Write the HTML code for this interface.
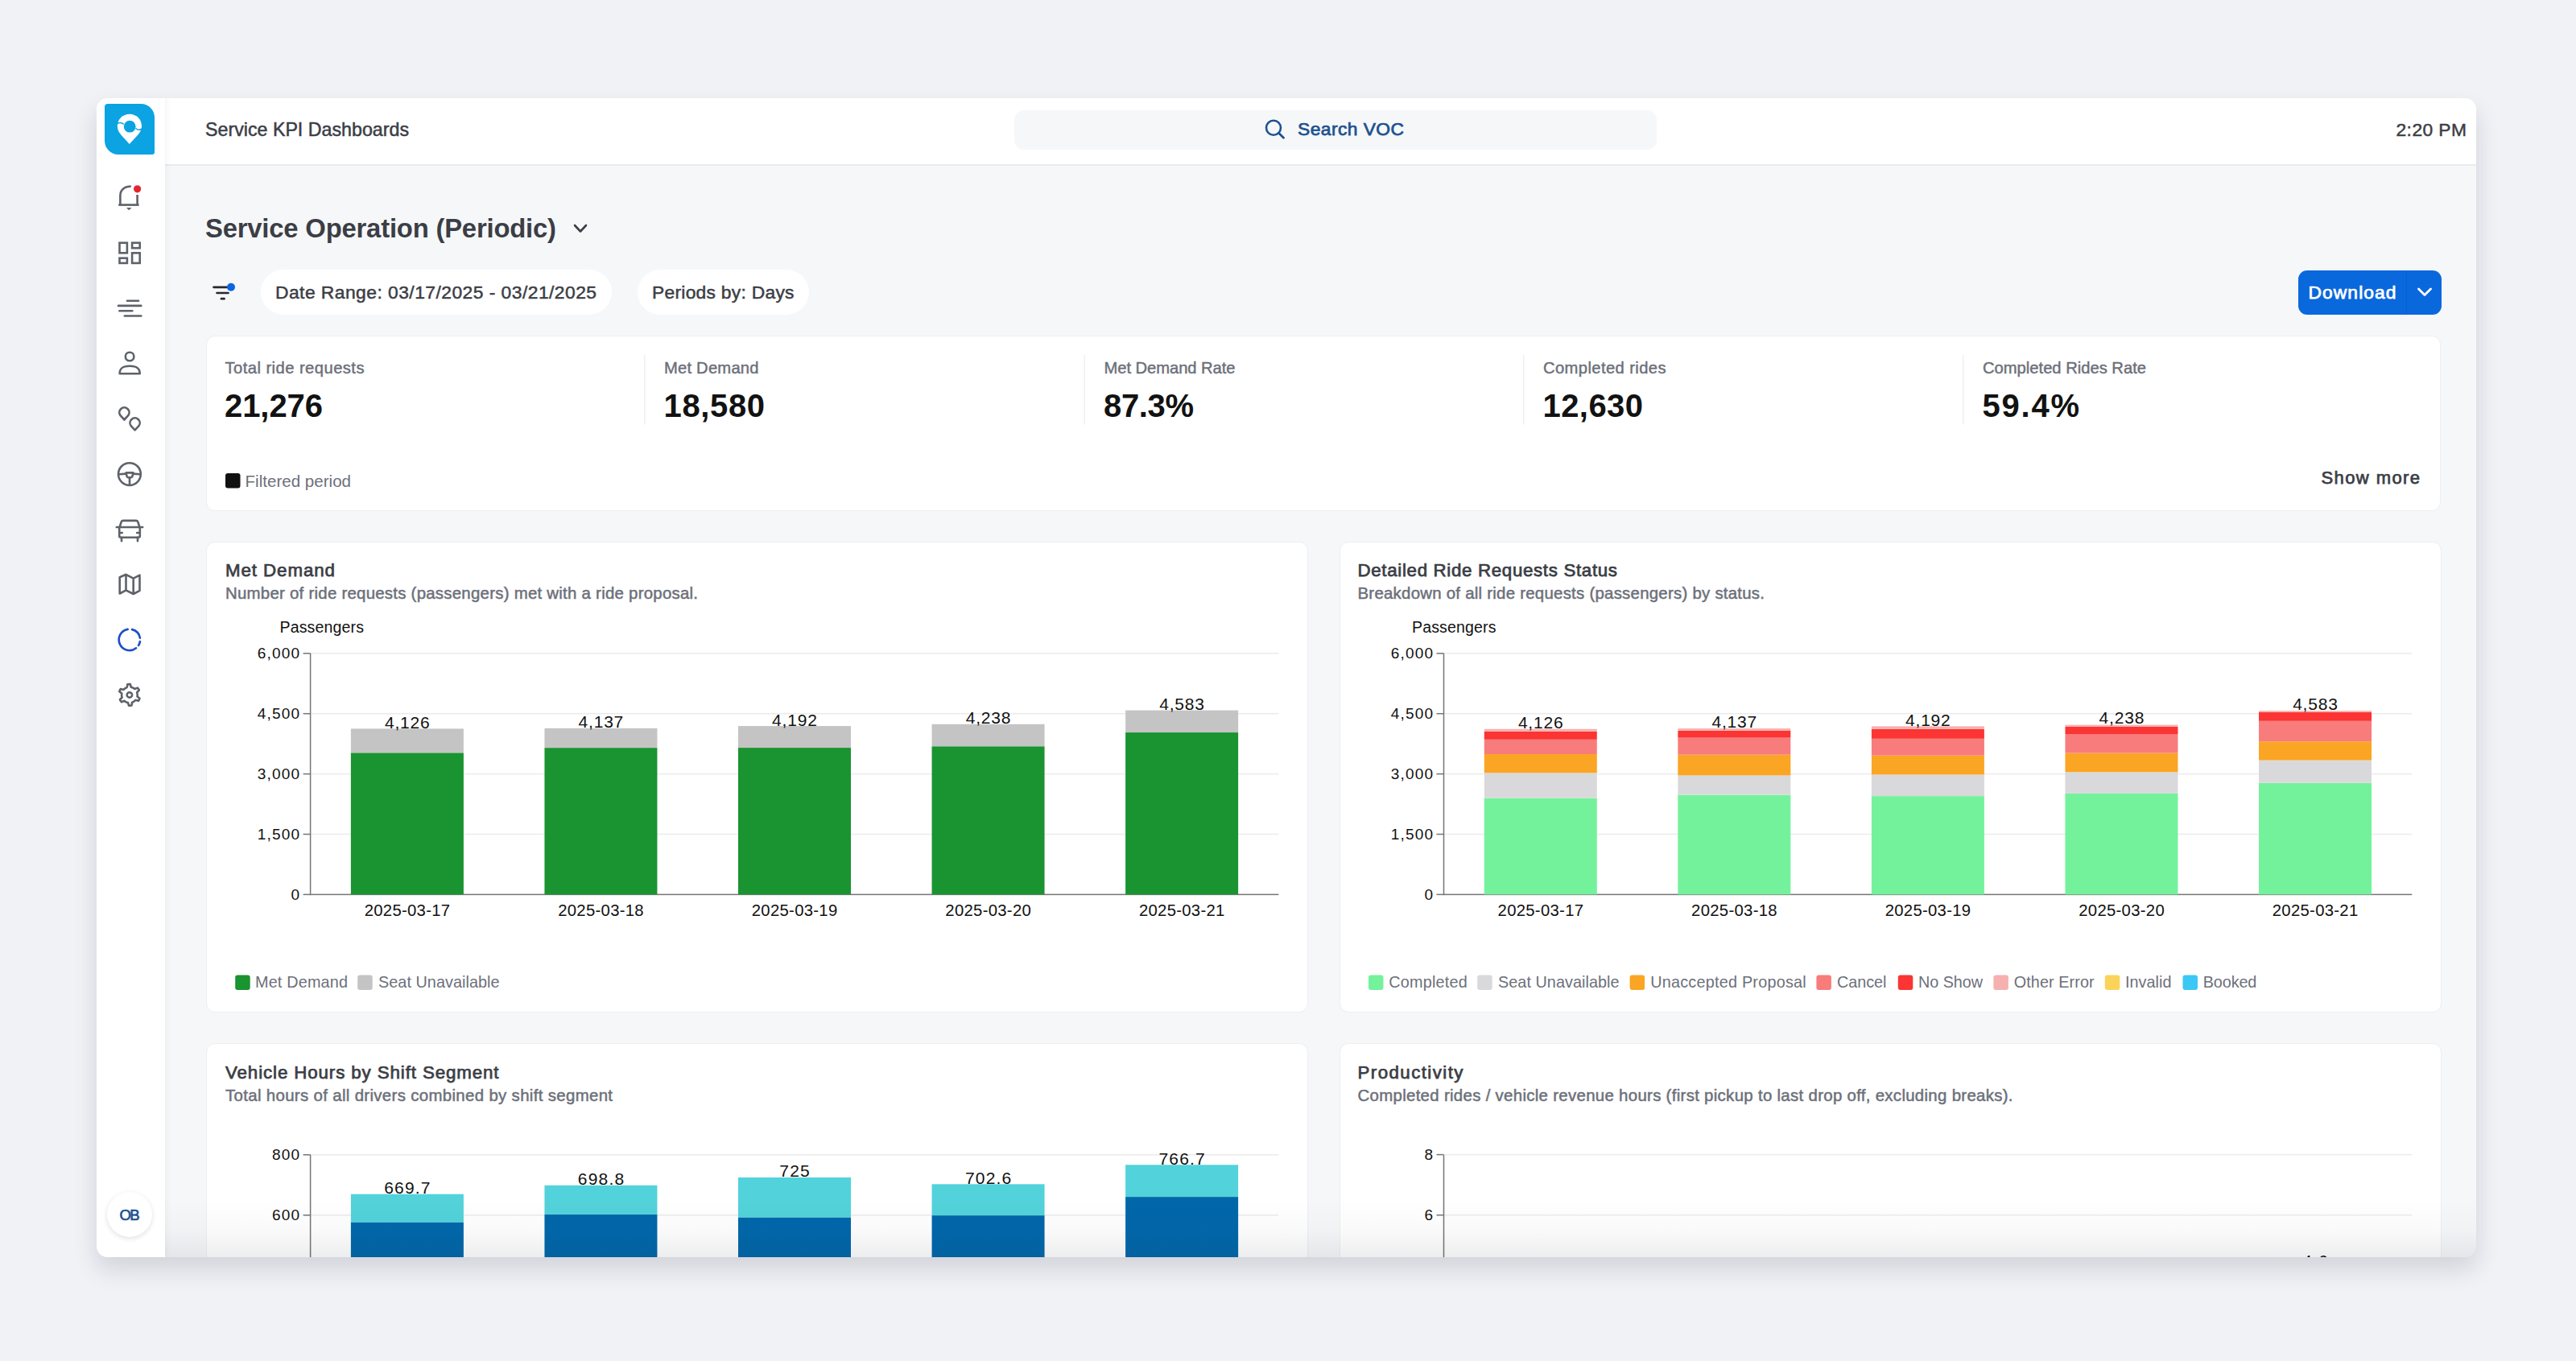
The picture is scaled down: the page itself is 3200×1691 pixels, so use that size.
<!DOCTYPE html>
<html><head><meta charset="utf-8"><style>
html,body{margin:0;padding:0}
body{width:3200px;height:1691px;background:#f1f2f6;position:relative;overflow:hidden;font-family:"Liberation Sans", sans-serif}
svg text{font-family:"Liberation Sans", sans-serif}
</style></head><body>
<div style="position:absolute;left:120px;top:122px;width:2956px;height:1440px;border-radius:14px;box-shadow:0 15px 30px rgba(20,24,40,0.14);background:#f6f7f9"></div>
<div style="position:absolute;left:120px;top:122px;width:2956px;height:1440px;border-radius:14px;overflow:hidden">
<div style="position:absolute;left:-120px;top:-122px;width:3200px;height:1691px">
<div style="position:absolute;left:205px;top:122px;width:2871px;height:82px;background:#fff;border-bottom:2px solid #eaebec"></div><div style="position:absolute;left:120px;top:122px;width:85px;height:1440px;background:#fff;box-shadow:2px 0 8px rgba(0,0,0,0.05)"></div><div style="position:absolute;left:1260px;top:136.5px;width:798px;height:49px;border-radius:12px;background:#f6f7f9"></div><div style="position:absolute;left:324px;top:335px;width:436px;height:56px;border-radius:28px;background:#fff"></div><div style="position:absolute;left:792px;top:335px;width:213px;height:56px;border-radius:28px;background:#fff"></div><div style="position:absolute;left:2855px;top:335.5px;width:178px;height:55px;border-radius:11px;background:#0a68dd"></div><div style="position:absolute;left:2988.5px;top:335.5px;width:1.5px;height:55px;background:rgba(0,40,120,0.10)"></div><div style="position:absolute;left:255.5px;top:417px;width:2776px;height:217.5px;border-radius:11px;background:#fff;box-sizing:border-box;border:1.5px solid #eceef0"></div><div style="position:absolute;left:255.5px;top:673px;width:1369px;height:585px;border-radius:11px;background:#fff;box-sizing:border-box;border:1.5px solid #eceef0"></div><div style="position:absolute;left:1663.5px;top:673px;width:1369px;height:585px;border-radius:11px;background:#fff;box-sizing:border-box;border:1.5px solid #eceef0"></div><div style="position:absolute;left:255.5px;top:1296px;width:1369px;height:400px;border-radius:11px;background:#fff;box-sizing:border-box;border:1.5px solid #eceef0"></div><div style="position:absolute;left:1663.5px;top:1296px;width:1369px;height:400px;border-radius:11px;background:#fff;box-sizing:border-box;border:1.5px solid #eceef0"></div><div style="position:absolute;left:133px;top:1481px;width:56px;height:56px;border-radius:50%;background:#fff;box-shadow:0 2px 6px rgba(0,0,0,0.12)"></div><div style="position:absolute;left:130px;top:129px;width:62px;height:62.5px;background:#0ba3e2;border-radius:4px 17px 3px 17px"></div>
<svg style="position:absolute;left:0;top:0" width="3200" height="1691" viewBox="0 0 3200 1691">
<text x="255" y="169" font-size="23.2" fill="#3b3e45" textLength="253" lengthAdjust="spacing" stroke="#3b3e45" stroke-width="0.5">Service KPI Dashboards</text>
<text x="1612" y="168" font-size="22.8" fill="#1c5290" textLength="132" lengthAdjust="spacing" stroke="#1c5290" stroke-width="0.75">Search VOC</text>
<text x="3064" y="168.5" font-size="22.8" fill="#3b3e45" text-anchor="end" textLength="87.5" lengthAdjust="spacing" stroke="#3b3e45" stroke-width="0.5">2:20 PM</text>
<circle cx="1582" cy="158.7" r="9" fill="none" stroke="#1c5290" stroke-width="2.6"/>
<line x1="1588.5" y1="165.2" x2="1594.5" y2="171.2" stroke="#1c5290" stroke-width="2.8" stroke-linecap="round"/>
<text x="255" y="295" font-size="32.8" font-weight="700" fill="#3b3e45" textLength="436" lengthAdjust="spacing">Service Operation (Periodic)</text>
<polyline points="714,280 721,287.5 728,280" fill="none" stroke="#3b3e45" stroke-width="2.6" stroke-linecap="round" stroke-linejoin="round"/>
<g stroke="#26282d" stroke-width="2.7" stroke-linecap="round"><line x1="265.5" y1="356.8" x2="284" y2="356.8"/><line x1="269.5" y1="364" x2="283.5" y2="364"/><line x1="275" y1="371.2" x2="278.5" y2="371.2"/></g>
<circle cx="287" cy="356.7" r="5" fill="#0a66e0"/>
<text x="342" y="371" font-size="22.8" fill="#3b3e45" textLength="399" lengthAdjust="spacing" stroke="#3b3e45" stroke-width="0.5">Date Range: 03/17/2025 - 03/21/2025</text>
<text x="810" y="371" font-size="22.8" fill="#3b3e45" textLength="176.5" lengthAdjust="spacing" stroke="#3b3e45" stroke-width="0.5">Periods by: Days</text>
<text x="2867.5" y="371" font-size="22.8" fill="#ffffff" textLength="109" lengthAdjust="spacing" stroke="#ffffff" stroke-width="0.75">Download</text>
<polyline points="3004.5,359 3012,366.5 3019.5,359" fill="none" stroke="#fff" stroke-width="2.8" stroke-linecap="round" stroke-linejoin="round"/>
<text x="279.5" y="463.5" font-size="20.2" fill="#6c707a" textLength="173" lengthAdjust="spacing" stroke="#6c707a" stroke-width="0.45">Total ride requests</text>
<text x="279.0" y="518" font-size="40" font-weight="700" fill="#121212" textLength="122" lengthAdjust="spacing">21,276</text>
<text x="825" y="463.5" font-size="20.2" fill="#6c707a" textLength="117.5" lengthAdjust="spacing" stroke="#6c707a" stroke-width="0.45">Met Demand</text>
<text x="824.5" y="518" font-size="40" font-weight="700" fill="#121212" textLength="125.5" lengthAdjust="spacing">18,580</text>
<rect x="800.00" y="441.00" width="1.50" height="86.50" fill="#eeeff1"/>
<text x="1371.5" y="463.5" font-size="20.2" fill="#6c707a" textLength="163" lengthAdjust="spacing" stroke="#6c707a" stroke-width="0.45">Met Demand Rate</text>
<text x="1371.0" y="518" font-size="40" font-weight="700" fill="#121212" textLength="112" lengthAdjust="spacing">87.3%</text>
<rect x="1346.50" y="441.00" width="1.50" height="86.50" fill="#eeeff1"/>
<text x="1917" y="463.5" font-size="20.2" fill="#6c707a" textLength="152.5" lengthAdjust="spacing" stroke="#6c707a" stroke-width="0.45">Completed rides</text>
<text x="1916.5" y="518" font-size="40" font-weight="700" fill="#121212" textLength="124.5" lengthAdjust="spacing">12,630</text>
<rect x="1892.00" y="441.00" width="1.50" height="86.50" fill="#eeeff1"/>
<text x="2463" y="463.5" font-size="20.2" fill="#6c707a" textLength="203" lengthAdjust="spacing" stroke="#6c707a" stroke-width="0.45">Completed Rides Rate</text>
<text x="2462.5" y="518" font-size="40" font-weight="700" fill="#121212" textLength="120.5" lengthAdjust="spacing">59.4%</text>
<rect x="2438.00" y="441.00" width="1.50" height="86.50" fill="#eeeff1"/>
<rect x="280" y="588" width="18.5" height="18.5" rx="3" fill="#111"/>
<text x="304.5" y="604.5" font-size="20.5" fill="#6c707a" textLength="131.5" lengthAdjust="spacing">Filtered period</text>
<text x="3006" y="601" font-size="22" fill="#3b3e45" text-anchor="end" textLength="122.5" lengthAdjust="spacing" stroke="#3b3e45" stroke-width="0.75">Show more</text>
<text x="280" y="716" font-size="22.3" fill="#3b3e45" textLength="136" lengthAdjust="spacing" stroke="#3b3e45" stroke-width="0.75">Met Demand</text>
<text x="280" y="743.5" font-size="20.4" fill="#6c707a" textLength="587" lengthAdjust="spacing" stroke="#6c707a" stroke-width="0.5">Number of ride requests (passengers) met with a ride proposal.</text>
<text x="347.5" y="786.2" font-size="19.5" fill="#111" textLength="104.5" lengthAdjust="spacing">Passengers</text>
<rect x="376.60" y="1110.65" width="9.00" height="1.50" fill="#757575"/>
<text x="373.3" y="1117.7" font-size="19" fill="#111" text-anchor="end" letter-spacing="1.2">0</text>
<rect x="385.60" y="1035.75" width="1202.80" height="1.50" fill="#ebebeb"/>
<rect x="376.60" y="1035.75" width="9.00" height="1.50" fill="#757575"/>
<text x="373.3" y="1042.8" font-size="19" fill="#111" text-anchor="end" letter-spacing="1.2">1,500</text>
<rect x="385.60" y="960.85" width="1202.80" height="1.50" fill="#ebebeb"/>
<rect x="376.60" y="960.85" width="9.00" height="1.50" fill="#757575"/>
<text x="373.3" y="967.9000000000001" font-size="19" fill="#111" text-anchor="end" letter-spacing="1.2">3,000</text>
<rect x="385.60" y="885.95" width="1202.80" height="1.50" fill="#ebebeb"/>
<rect x="376.60" y="885.95" width="9.00" height="1.50" fill="#757575"/>
<text x="373.3" y="893.0" font-size="19" fill="#111" text-anchor="end" letter-spacing="1.2">4,500</text>
<rect x="385.60" y="811.05" width="1202.80" height="1.50" fill="#ebebeb"/>
<rect x="376.60" y="811.05" width="9.00" height="1.50" fill="#757575"/>
<text x="373.3" y="818.1" font-size="19" fill="#111" text-anchor="end" letter-spacing="1.2">6,000</text>
<rect x="384.85" y="811.80" width="1.50" height="300.40" fill="#757575"/>
<rect x="385.60" y="1110.65" width="1202.80" height="1.50" fill="#757575"/>
<rect x="435.88" y="905.38" width="140.00" height="30.11" fill="#c4c4c4"/>
<rect x="435.88" y="935.48" width="140.00" height="175.92" fill="#1a9331"/>
<text x="506.28" y="904.8750666666667" font-size="21" fill="#111" text-anchor="middle" letter-spacing="0.8">4,126</text>
<text x="506.03" y="1138.2" font-size="20.3" fill="#111" text-anchor="middle" letter-spacing="0.3">2025-03-17</text>
<rect x="676.44" y="904.83" width="140.00" height="24.37" fill="#c4c4c4"/>
<rect x="676.44" y="929.19" width="140.00" height="182.21" fill="#1a9331"/>
<text x="746.84" y="904.3258000000001" font-size="21" fill="#111" text-anchor="middle" letter-spacing="0.8">4,137</text>
<text x="746.59" y="1138.2" font-size="20.3" fill="#111" text-anchor="middle" letter-spacing="0.3">2025-03-18</text>
<rect x="917.00" y="902.08" width="140.00" height="27.01" fill="#c4c4c4"/>
<rect x="917.00" y="929.09" width="140.00" height="182.31" fill="#1a9331"/>
<text x="987.4" y="901.5794666666668" font-size="21" fill="#111" text-anchor="middle" letter-spacing="0.8">4,192</text>
<text x="987.15" y="1138.2" font-size="20.3" fill="#111" text-anchor="middle" letter-spacing="0.3">2025-03-19</text>
<rect x="1157.56" y="899.78" width="140.00" height="27.61" fill="#c4c4c4"/>
<rect x="1157.56" y="927.40" width="140.00" height="184.00" fill="#1a9331"/>
<text x="1227.96" y="899.2825333333334" font-size="21" fill="#111" text-anchor="middle" letter-spacing="0.8">4,238</text>
<text x="1227.71" y="1138.2" font-size="20.3" fill="#111" text-anchor="middle" letter-spacing="0.3">2025-03-20</text>
<rect x="1398.12" y="882.56" width="140.00" height="27.51" fill="#c4c4c4"/>
<rect x="1398.12" y="910.07" width="140.00" height="201.33" fill="#1a9331"/>
<text x="1468.52" y="882.0555333333334" font-size="21" fill="#111" text-anchor="middle" letter-spacing="0.8">4,583</text>
<text x="1468.27" y="1138.2" font-size="20.3" fill="#111" text-anchor="middle" letter-spacing="0.3">2025-03-21</text>
<rect x="292.2" y="1211.5" width="18.5" height="18.5" rx="3" fill="#1a9331"/>
<text x="317" y="1227.2" font-size="19.8" fill="#6c707a" textLength="115" lengthAdjust="spacing">Met Demand</text>
<rect x="444.2" y="1211.5" width="18.5" height="18.5" rx="3" fill="#c4c4c4"/>
<text x="470" y="1227.2" font-size="19.8" fill="#6c707a" textLength="150.5" lengthAdjust="spacing">Seat Unavailable</text>
<text x="1686.5" y="716" font-size="22.3" fill="#3b3e45" textLength="322.5" lengthAdjust="spacing" stroke="#3b3e45" stroke-width="0.75">Detailed Ride Requests Status</text>
<text x="1686.5" y="743.5" font-size="20.4" fill="#6c707a" textLength="505.5" lengthAdjust="spacing" stroke="#6c707a" stroke-width="0.5">Breakdown of all ride requests (passengers) by status.</text>
<text x="1754" y="786.2" font-size="19.5" fill="#111" textLength="104.5" lengthAdjust="spacing">Passengers</text>
<rect x="1784.50" y="1110.65" width="9.00" height="1.50" fill="#757575"/>
<text x="1781.2" y="1117.7" font-size="19" fill="#111" text-anchor="end" letter-spacing="1.2">0</text>
<rect x="1793.50" y="1035.75" width="1202.80" height="1.50" fill="#ebebeb"/>
<rect x="1784.50" y="1035.75" width="9.00" height="1.50" fill="#757575"/>
<text x="1781.2" y="1042.8" font-size="19" fill="#111" text-anchor="end" letter-spacing="1.2">1,500</text>
<rect x="1793.50" y="960.85" width="1202.80" height="1.50" fill="#ebebeb"/>
<rect x="1784.50" y="960.85" width="9.00" height="1.50" fill="#757575"/>
<text x="1781.2" y="967.9000000000001" font-size="19" fill="#111" text-anchor="end" letter-spacing="1.2">3,000</text>
<rect x="1793.50" y="885.95" width="1202.80" height="1.50" fill="#ebebeb"/>
<rect x="1784.50" y="885.95" width="9.00" height="1.50" fill="#757575"/>
<text x="1781.2" y="893.0" font-size="19" fill="#111" text-anchor="end" letter-spacing="1.2">4,500</text>
<rect x="1793.50" y="811.05" width="1202.80" height="1.50" fill="#ebebeb"/>
<rect x="1784.50" y="811.05" width="9.00" height="1.50" fill="#757575"/>
<text x="1781.2" y="818.1" font-size="19" fill="#111" text-anchor="end" letter-spacing="1.2">6,000</text>
<rect x="1792.75" y="811.80" width="1.50" height="300.40" fill="#757575"/>
<rect x="1793.50" y="1110.65" width="1202.80" height="1.50" fill="#757575"/>
<rect x="1843.78" y="991.70" width="140.00" height="119.70" fill="#74f29b"/>
<rect x="1843.78" y="960.30" width="140.00" height="31.40" fill="#d9d9dc"/>
<rect x="1843.78" y="937.00" width="140.00" height="23.30" fill="#fba524"/>
<rect x="1843.78" y="918.80" width="140.00" height="18.20" fill="#f87c7c"/>
<rect x="1843.78" y="908.90" width="140.00" height="9.90" fill="#fb3434"/>
<rect x="1843.78" y="905.80" width="140.00" height="3.10" fill="#f6b0ae"/>
<text x="1914.18" y="904.8750666666667" font-size="21" fill="#111" text-anchor="middle" letter-spacing="0.8">4,126</text>
<text x="1913.93" y="1138.2" font-size="20.3" fill="#111" text-anchor="middle" letter-spacing="0.3">2025-03-17</text>
<rect x="2084.34" y="987.60" width="140.00" height="123.80" fill="#74f29b"/>
<rect x="2084.34" y="963.40" width="140.00" height="24.20" fill="#d9d9dc"/>
<rect x="2084.34" y="937.70" width="140.00" height="25.70" fill="#fba524"/>
<rect x="2084.34" y="916.60" width="140.00" height="21.10" fill="#f87c7c"/>
<rect x="2084.34" y="907.80" width="140.00" height="8.80" fill="#fb3434"/>
<rect x="2084.34" y="905.10" width="140.00" height="2.70" fill="#f6b0ae"/>
<text x="2154.7400000000002" y="904.3258000000001" font-size="21" fill="#111" text-anchor="middle" letter-spacing="0.8">4,137</text>
<text x="2154.4900000000002" y="1138.2" font-size="20.3" fill="#111" text-anchor="middle" letter-spacing="0.3">2025-03-18</text>
<rect x="2324.90" y="989.10" width="140.00" height="122.30" fill="#74f29b"/>
<rect x="2324.90" y="962.40" width="140.00" height="26.70" fill="#d9d9dc"/>
<rect x="2324.90" y="938.70" width="140.00" height="23.70" fill="#fba524"/>
<rect x="2324.90" y="917.80" width="140.00" height="20.90" fill="#f87c7c"/>
<rect x="2324.90" y="905.80" width="140.00" height="12.00" fill="#fb3434"/>
<rect x="2324.90" y="902.40" width="140.00" height="3.40" fill="#f6b0ae"/>
<text x="2395.3" y="901.5794666666668" font-size="21" fill="#111" text-anchor="middle" letter-spacing="0.8">4,192</text>
<text x="2395.05" y="1138.2" font-size="20.3" fill="#111" text-anchor="middle" letter-spacing="0.3">2025-03-19</text>
<rect x="2565.46" y="986.00" width="140.00" height="125.40" fill="#74f29b"/>
<rect x="2565.46" y="959.30" width="140.00" height="26.70" fill="#d9d9dc"/>
<rect x="2565.46" y="935.60" width="140.00" height="23.70" fill="#fba524"/>
<rect x="2565.46" y="912.50" width="140.00" height="23.10" fill="#f87c7c"/>
<rect x="2565.46" y="902.70" width="140.00" height="9.80" fill="#fb3434"/>
<rect x="2565.46" y="900.60" width="140.00" height="2.10" fill="#f6b0ae"/>
<text x="2635.86" y="899.2825333333334" font-size="21" fill="#111" text-anchor="middle" letter-spacing="0.8">4,238</text>
<text x="2635.61" y="1138.2" font-size="20.3" fill="#111" text-anchor="middle" letter-spacing="0.3">2025-03-20</text>
<rect x="2806.02" y="972.70" width="140.00" height="138.70" fill="#74f29b"/>
<rect x="2806.02" y="944.60" width="140.00" height="28.10" fill="#d9d9dc"/>
<rect x="2806.02" y="921.20" width="140.00" height="23.40" fill="#fba524"/>
<rect x="2806.02" y="895.80" width="140.00" height="25.40" fill="#f87c7c"/>
<rect x="2806.02" y="884.70" width="140.00" height="11.10" fill="#fb3434"/>
<rect x="2806.02" y="883.10" width="140.00" height="1.60" fill="#f6b0ae"/>
<text x="2876.42" y="882.0555333333334" font-size="21" fill="#111" text-anchor="middle" letter-spacing="0.8">4,583</text>
<text x="2876.17" y="1138.2" font-size="20.3" fill="#111" text-anchor="middle" letter-spacing="0.3">2025-03-21</text>
<rect x="1700" y="1211.5" width="18.5" height="18.5" rx="3" fill="#74f29b"/>
<text x="1725.2" y="1227.2" font-size="19.8" fill="#6c707a" textLength="97.5" lengthAdjust="spacing">Completed</text>
<rect x="1835.2" y="1211.5" width="18.5" height="18.5" rx="3" fill="#d9d9dc"/>
<text x="1861" y="1227.2" font-size="19.8" fill="#6c707a" textLength="150.5" lengthAdjust="spacing">Seat Unavailable</text>
<rect x="2024.6" y="1211.5" width="18.5" height="18.5" rx="3" fill="#fba524"/>
<text x="2050.2" y="1227.2" font-size="19.8" fill="#6c707a" textLength="193.5" lengthAdjust="spacing">Unaccepted Proposal</text>
<rect x="2256.4" y="1211.5" width="18.5" height="18.5" rx="3" fill="#f87c7c"/>
<text x="2282" y="1227.2" font-size="19.8" fill="#6c707a" textLength="61.5" lengthAdjust="spacing">Cancel</text>
<rect x="2357.8" y="1211.5" width="18.5" height="18.5" rx="3" fill="#fb3434"/>
<text x="2383" y="1227.2" font-size="19.8" fill="#6c707a" textLength="80" lengthAdjust="spacing">No Show</text>
<rect x="2476.4" y="1211.5" width="18.5" height="18.5" rx="3" fill="#f6b0ae"/>
<text x="2501.7" y="1227.2" font-size="19.8" fill="#6c707a" textLength="100" lengthAdjust="spacing">Other Error</text>
<rect x="2614.8" y="1211.5" width="18.5" height="18.5" rx="3" fill="#fcd35a"/>
<text x="2640" y="1227.2" font-size="19.8" fill="#6c707a" textLength="57.5" lengthAdjust="spacing">Invalid</text>
<rect x="2711.5" y="1211.5" width="18.5" height="18.5" rx="3" fill="#3cc8f4"/>
<text x="2736.8" y="1227.2" font-size="19.8" fill="#6c707a" textLength="66.5" lengthAdjust="spacing">Booked</text>
<text x="280" y="1340" font-size="22.3" fill="#3b3e45" textLength="339.5" lengthAdjust="spacing" stroke="#3b3e45" stroke-width="0.75">Vehicle Hours by Shift Segment</text>
<text x="280" y="1367.5" font-size="20.4" fill="#6c707a" textLength="481" lengthAdjust="spacing" stroke="#6c707a" stroke-width="0.5">Total hours of all drivers combined by shift segment</text>
<rect x="385.60" y="1509.05" width="1202.80" height="1.50" fill="#ebebeb"/>
<rect x="376.60" y="1509.05" width="9.00" height="1.50" fill="#757575"/>
<text x="373.3" y="1516.1" font-size="19" fill="#111" text-anchor="end" letter-spacing="1.2">600</text>
<rect x="385.60" y="1434.05" width="1202.80" height="1.50" fill="#ebebeb"/>
<rect x="376.60" y="1434.05" width="9.00" height="1.50" fill="#757575"/>
<text x="373.3" y="1441.1" font-size="19" fill="#111" text-anchor="end" letter-spacing="1.2">800</text>
<rect x="384.85" y="1434.80" width="1.50" height="200.00" fill="#757575"/>
<rect x="435.88" y="1483.66" width="140.00" height="35.14" fill="#52d2da"/>
<rect x="435.88" y="1518.80" width="140.00" height="216.00" fill="#0167aa"/>
<text x="506.48" y="1483.1625" font-size="21" fill="#111" text-anchor="middle" letter-spacing="1.2">669.7</text>
<rect x="676.44" y="1472.75" width="140.00" height="36.30" fill="#52d2da"/>
<rect x="676.44" y="1509.05" width="140.00" height="225.75" fill="#0167aa"/>
<text x="747.0400000000001" y="1472.25" font-size="21" fill="#111" text-anchor="middle" letter-spacing="1.2">698.8</text>
<rect x="917.00" y="1462.92" width="140.00" height="49.88" fill="#52d2da"/>
<rect x="917.00" y="1512.80" width="140.00" height="222.00" fill="#0167aa"/>
<text x="987.6" y="1462.425" font-size="21" fill="#111" text-anchor="middle" letter-spacing="1.2">725</text>
<rect x="1157.56" y="1471.32" width="140.00" height="38.85" fill="#52d2da"/>
<rect x="1157.56" y="1510.17" width="140.00" height="224.62" fill="#0167aa"/>
<text x="1228.1599999999999" y="1470.8249999999998" font-size="21" fill="#111" text-anchor="middle" letter-spacing="1.2">702.6</text>
<rect x="1398.12" y="1447.29" width="140.00" height="39.83" fill="#52d2da"/>
<rect x="1398.12" y="1487.11" width="140.00" height="247.69" fill="#0167aa"/>
<text x="1468.7199999999998" y="1446.7875" font-size="21" fill="#111" text-anchor="middle" letter-spacing="1.2">766.7</text>
<text x="1686.5" y="1340" font-size="22.3" fill="#3b3e45" textLength="131" lengthAdjust="spacing" stroke="#3b3e45" stroke-width="0.75">Productivity</text>
<text x="1686.5" y="1367.5" font-size="20.4" fill="#6c707a" textLength="814" lengthAdjust="spacing" stroke="#6c707a" stroke-width="0.5">Completed rides / vehicle revenue hours (first pickup to last drop off, excluding breaks).</text>
<rect x="1793.50" y="1508.95" width="1202.80" height="1.50" fill="#ebebeb"/>
<rect x="1784.50" y="1508.95" width="9.00" height="1.50" fill="#757575"/>
<text x="1781.2" y="1516.0" font-size="19" fill="#111" text-anchor="end" letter-spacing="1.2">6</text>
<rect x="1793.50" y="1433.85" width="1202.80" height="1.50" fill="#ebebeb"/>
<rect x="1784.50" y="1433.85" width="9.00" height="1.50" fill="#757575"/>
<text x="1781.2" y="1440.8999999999999" font-size="19" fill="#111" text-anchor="end" letter-spacing="1.2">8</text>
<rect x="1792.75" y="1435.00" width="1.50" height="200.00" fill="#757575"/>
<text x="2876.6" y="1574" font-size="21" fill="#111" text-anchor="middle" letter-spacing="1.2">4.6</text>
<path d="M161,141.8 C169.5,141.8 176,148.3 176,156.8 C176,161.5 173.8,165 170.5,168.6 L160.8,179 L151.2,168.6 C147.9,165 145.8,161.5 145.8,156.8 C145.8,148.3 152.5,141.8 161,141.8 Z" fill="#fff"/>
<circle cx="161.2" cy="157.2" r="7.4" fill="#0ba3e2"/>
<path d="M145.5,153.5 C149,151.5 151.5,152.5 154,154.5 M168.5,159.5 C171,161.5 173.5,162 176.5,160" fill="none" stroke="#0ba3e2" stroke-width="1.6"/>
<path d="M149.4,254.6 L149.4,243 C149.4,235.5 155,231.5 162.8,231.5" fill="none" stroke="#5e626a" stroke-width="2.6"/>
<path d="M170.6,242 L170.6,254.6" fill="none" stroke="#5e626a" stroke-width="2.6"/>
<line x1="147.2" y1="254.6" x2="172.6" y2="254.6" stroke="#5e626a" stroke-width="2.6"/>
<path d="M157,258 L163.5,258 L160.2,261.2 Z" fill="#5e626a"/>
<circle cx="170.6" cy="234.8" r="4.6" fill="#e3262d"/>
<g fill="none" stroke="#5e626a" stroke-width="2.6"><rect x="148.5" y="301.7" width="9.4" height="12.6"/><rect x="164.1" y="301.7" width="9.6" height="6.5"/><rect x="148.5" y="320.7" width="9.4" height="6.2"/><rect x="164.1" y="314.3" width="9.6" height="12.6"/></g>
<g stroke="#5e626a" stroke-width="2.6" stroke-linecap="round"><line x1="158" y1="373.7" x2="172" y2="373.7"/><line x1="147" y1="379.9" x2="175.3" y2="379.9"/><line x1="148.4" y1="386.3" x2="164.3" y2="386.3"/><line x1="154.8" y1="392.5" x2="175.3" y2="392.5"/></g>
<circle cx="161.1" cy="443" r="5.3" fill="none" stroke="#5e626a" stroke-width="2.6"/>
<path d="M148.7,464.2 C148.7,457 153,454.8 161.1,454.8 C169.2,454.8 173.7,457 173.7,464.2 Z" fill="none" stroke="#5e626a" stroke-width="2.6" stroke-linejoin="round"/>
<path d="M154.4,521.5 L149.52,516.16 A6.1,6.1 0 1 1 159.28,516.16 Z" fill="none" stroke="#5e626a" stroke-width="2.6" stroke-linejoin="round"/>
<path d="M167.6,534.3 L162.72,529.16 A6.1,6.1 0 1 1 172.48,529.16 Z" fill="none" stroke="#5e626a" stroke-width="2.6" stroke-linejoin="round"/>
<circle cx="160.9" cy="589.1" r="13.9" fill="none" stroke="#5e626a" stroke-width="2.6"/>
<path d="M147.5,589.3 L156.8,588.6 M165,588.6 L174.3,589.3 M161,593.2 L161,603" fill="none" stroke="#5e626a" stroke-width="2.6"/>
<path d="M156.6,587.4 L165.4,587.4 L164.6,591.2 C164.3,592.6 163.5,593.2 162.2,593.2 L159.8,593.2 C158.5,593.2 157.7,592.6 157.4,591.2 Z" fill="none" stroke="#5e626a" stroke-width="2.6" stroke-linejoin="round"/>
<path d="M148.6,655 L150.6,648.6 C150.9,647.6 151.6,646.9 152.7,646.9 L169.3,646.9 C170.4,646.9 171.1,647.6 171.4,648.6 L173.4,655" fill="none" stroke="#5e626a" stroke-width="2.6" stroke-linejoin="round"/>
<path d="M144.8,655 L177.2,655" fill="none" stroke="#5e626a" stroke-width="2.6" stroke-linecap="round"/>
<path d="M148.2,655 L148.2,666 C148.2,667.2 148.8,667.7 150,667.7 L172,667.7 C173.2,667.7 173.8,667.2 173.8,666 L173.8,655" fill="none" stroke="#5e626a" stroke-width="2.6"/>
<path d="M151,667.7 L151,672.2 M171,667.7 L171,672.2 M148.2,662 L151.8,662 M170.2,662 L173.8,662" fill="none" stroke="#5e626a" stroke-width="2.6" stroke-linecap="round"/>
<path d="M148.7,717.2 L156.5,713.8 L165.7,718.6 L173.5,714.6 L173.5,733.8 L165.7,738 L156.5,733.4 L148.7,737.5 Z M156.5,713.8 L156.5,733.4 M165.7,718.6 L165.7,738" fill="none" stroke="#5e626a" stroke-width="2.6" stroke-linejoin="round"/>
<path d="M164.09,782.09 A13.2,13.2 0 0 1 173.90,792.61" fill="none" stroke="#1d4fc4" stroke-width="2.7" stroke-linecap="round"/>
<path d="M173.90,797.19 A13.2,13.2 0 0 1 172.09,801.89" fill="none" stroke="#1d4fc4" stroke-width="2.7" stroke-linecap="round"/>
<path d="M169.03,805.30 A13.2,13.2 0 1 1 158.61,781.90" fill="none" stroke="#1d4fc4" stroke-width="2.7" stroke-linecap="round"/>
<path d="M158.31,850.36 L160.03,850.13 L161.77,850.13 L162.81,853.79 L164.05,854.12 L165.23,854.61 L166.34,855.25 L167.36,856.03 L170.90,854.63 L171.96,856.01 L172.83,857.52 L170.18,860.25 L170.51,861.49 L170.68,862.76 L170.68,864.04 L170.51,865.31 L173.49,867.68 L172.83,869.28 L171.96,870.79 L168.27,869.86 L167.36,870.77 L166.34,871.55 L165.23,872.19 L164.05,872.68 L163.49,876.44 L161.77,876.67 L160.03,876.67 L158.99,873.01 L157.75,872.68 L156.57,872.19 L155.46,871.55 L154.44,870.77 L150.90,872.17 L149.84,870.79 L148.97,869.28 L151.62,866.55 L151.29,865.31 L151.12,864.04 L151.12,862.76 L151.29,861.49 L148.31,859.12 L148.97,857.52 L149.84,856.01 L153.53,856.94 L154.44,856.03 L155.46,855.25 L156.57,854.61 L157.75,854.12 Z" fill="none" stroke="#5e626a" stroke-width="2.6" stroke-linejoin="round"/>
<circle cx="160.9" cy="863.4" r="3.2" fill="none" stroke="#5e626a" stroke-width="2.6"/>
<text x="161" y="1516" font-size="18.5" fill="#1c5290" stroke="#1c5290" stroke-width="0.7" text-anchor="middle" textLength="25" lengthAdjust="spacing">OB</text>
</svg>
<div style="position:absolute;left:205px;top:1488px;width:2871px;height:74px;background:linear-gradient(to bottom, rgba(30,35,50,0) 0%, rgba(30,35,50,0.025) 55%, rgba(30,35,50,0.08) 100%)"></div>
</div></div>
</body></html>
